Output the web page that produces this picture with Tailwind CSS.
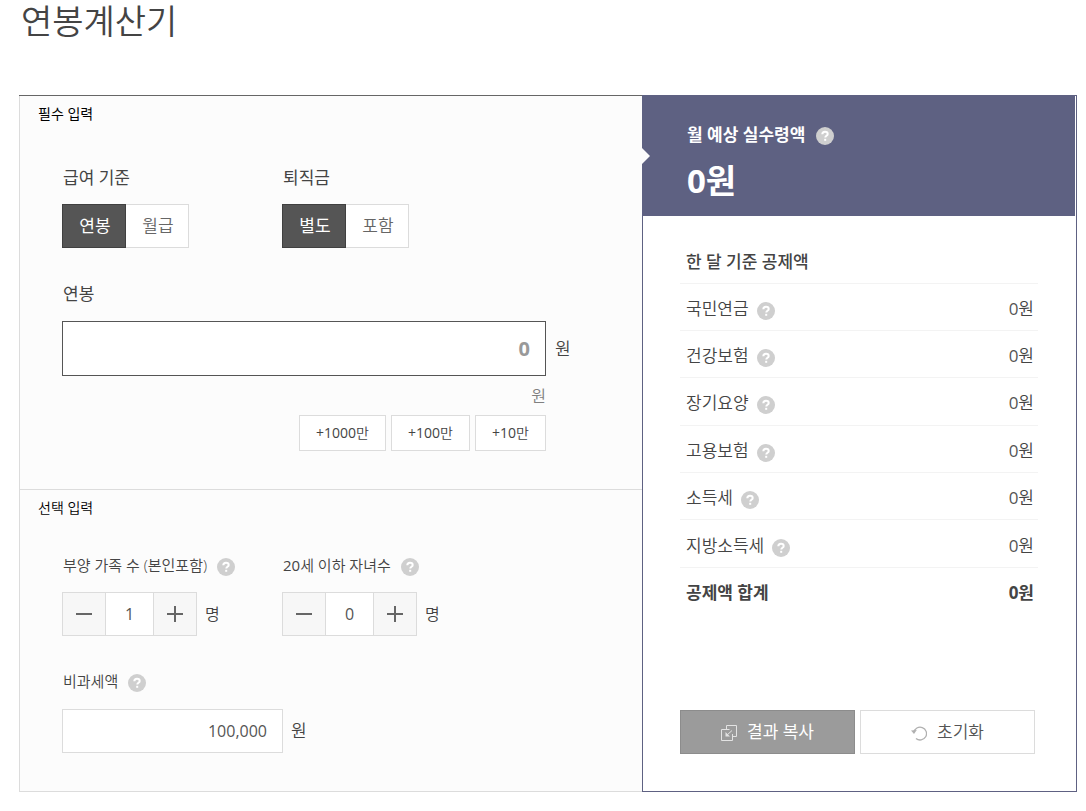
<!DOCTYPE html>
<html lang="ko">
<head>
<meta charset="utf-8">
<meta name="viewport" content="width=device-width, initial-scale=1">
<title>연봉계산기</title>
<script src="https://cdn.jsdelivr.net/npm/@tailwindcss/browser@4"></script>
</head>
<body class="bg-white pl-[19px] pr-[9px] font-['Open_Sans','Noto_Sans_CJK_KR',sans-serif] font-[350] text-[#444]">
<svg class="hidden" aria-hidden="true">
  <symbol id="help" viewBox="0 0 18 18">
    <circle cx="9" cy="9" r="9" fill="#cfcfcf"/>
    <path d="M6.3 7.2C6.3 5.5 7.4 4.7 9 4.7s2.7.9 2.7 2.2c0 1.9-2.4 1.9-2.4 3.7" fill="none" stroke="#fff" stroke-width="2"/>
    <rect x="8.2" y="11.8" width="2" height="2" fill="#fff"/>
  </symbol>
  <symbol id="minus" viewBox="0 0 16 16"><path d="M0 8h16" stroke="#666" stroke-width="2"/></symbol>
  <symbol id="plus" viewBox="0 0 16 16"><path d="M0 8h16M8 0v16" stroke="#666" stroke-width="2"/></symbol>
</svg>

<h1 class="h-[95px] pl-0.5 text-[34px] leading-[42px]">연봉계산기</h1>

<main class="flex">
  <form class="flex min-w-0 flex-1 flex-col border-t border-t-[#666] bg-[#fcfcfc]">
    <section class="border-b border-l border-[#dcdcdc] pb-[38px] pl-[42px]">
      <h2 class="-ml-6 pt-2 text-sm leading-5 font-normal text-black">필수 입력</h2>
      <div class="mt-[42px] flex">
        <fieldset class="w-[220px]">
          <legend class="pl-px text-[17px] leading-6 font-normal">급여 기준</legend>
          <div class="mt-3.5 flex h-11">
            <label class="flex w-16 items-center justify-center border border-[#404040] bg-[#555] pl-0.5 text-[17px] font-normal text-white"><input type="radio" name="basis" class="sr-only" checked>연봉</label>
            <label class="flex w-[63px] items-center justify-center border border-l-0 border-[#dcdcdc] bg-white pl-0.5 text-[17px] text-[#666]"><input type="radio" name="basis" class="sr-only">월급</label>
          </div>
        </fieldset>
        <fieldset>
          <legend class="pl-px text-[17px] leading-6 font-normal">퇴직금</legend>
          <div class="mt-3.5 flex h-11">
            <label class="flex w-16 items-center justify-center border border-[#404040] bg-[#555] pl-0.5 text-[17px] font-normal text-white"><input type="radio" name="severance" class="sr-only" checked>별도</label>
            <label class="flex w-[63px] items-center justify-center border border-l-0 border-[#dcdcdc] bg-white pl-0.5 text-[17px] text-[#666]"><input type="radio" name="severance" class="sr-only">포함</label>
          </div>
        </fieldset>
      </div>
      <label for="salary" class="mt-[34px] block pl-px text-[17px] leading-6 font-normal">연봉</label>
      <div class="mt-[15px] flex items-center gap-[9px]">
        <input id="salary" type="text" value="0" class="h-[55px] w-full max-w-[484px] border border-[#555] bg-white pr-[15px] text-right text-xl font-bold text-[#999]">
        <span class="text-[17px]">원</span>
      </div>
      <div class="max-w-[484px]">
        <p class="mt-2.5 text-right text-base leading-5 text-[#808080]">원</p>
        <div class="mt-[9px] flex h-9 justify-end gap-[5px] text-sm">
          <button type="button" class="w-[87px] border border-[#dcdcdc] bg-white"><span class="font-normal">+1000</span>만</button>
          <button type="button" class="w-[79px] border border-[#dcdcdc] bg-white"><span class="font-normal">+100</span>만</button>
          <button type="button" class="w-[71px] border border-[#dcdcdc] bg-white"><span class="font-normal">+10</span>만</button>
        </div>
      </div>
    </section>

    <section class="flex-1 border-b border-l border-[#dcdcdc] pb-[38px] pl-[42px]">
      <h2 class="-ml-6 pt-2 text-sm leading-5 text-black">선택 입력</h2>
      <div class="mt-[35px] flex">
        <div class="w-[220px]">
          <div class="flex h-6 items-center gap-2.5 pl-px">
            <label for="family" class="text-[15px] leading-6">부양 가족 수 (본인포함)</label>
            <button type="button" aria-label="부양 가족 수 도움말" class="pt-1"><svg class="size-[18px]"><use href="#help"/></svg></button>
          </div>
          <div class="mt-[15px] flex h-11 items-center">
            <button type="button" aria-label="감소" class="flex h-11 w-11 items-center justify-center border border-[#dcdcdc] bg-[#f7f7f7]"><svg class="size-4"><use href="#minus"/></svg></button>
            <input id="family" type="text" value="1" class="h-11 w-[47px] border-y border-[#dcdcdc] bg-white text-center text-base font-normal text-[#555]">
            <button type="button" aria-label="증가" class="flex h-11 w-11 items-center justify-center border border-[#dcdcdc] bg-[#f7f7f7]"><svg class="size-4"><use href="#plus"/></svg></button>
            <span class="ml-2 text-base">명</span>
          </div>
        </div>
        <div>
          <div class="flex h-6 items-center gap-2.5 pl-px">
            <label for="children" class="text-[15px] leading-6"><span class="font-normal">20</span>세 이하 자녀수</label>
            <button type="button" aria-label="자녀수 도움말" class="pt-1"><svg class="size-[18px]"><use href="#help"/></svg></button>
          </div>
          <div class="mt-[15px] flex h-11 items-center">
            <button type="button" aria-label="감소" class="flex h-11 w-11 items-center justify-center border border-[#dcdcdc] bg-[#f7f7f7]"><svg class="size-4"><use href="#minus"/></svg></button>
            <input id="children" type="text" value="0" class="h-11 w-[47px] border-y border-[#dcdcdc] bg-white text-center text-base font-normal text-[#555]">
            <button type="button" aria-label="증가" class="flex h-11 w-11 items-center justify-center border border-[#dcdcdc] bg-[#f7f7f7]"><svg class="size-4"><use href="#plus"/></svg></button>
            <span class="ml-2 text-base">명</span>
          </div>
        </div>
      </div>
      <div class="mt-[33px] flex h-6 items-center gap-2.5 pl-px">
        <label for="taxfree" class="text-[15px] leading-6">비과세액</label>
        <button type="button" aria-label="비과세액 도움말" class="pt-1"><svg class="size-[18px]"><use href="#help"/></svg></button>
      </div>
      <div class="mt-4 flex items-center gap-2">
        <input id="taxfree" type="text" value="100,000" class="h-11 w-[221px] border border-[#dcdcdc] bg-white pr-[15px] text-right text-base font-normal text-[#555]">
        <span class="text-[17px]">원</span>
      </div>
    </section>
  </form>

  <aside class="flex w-[435px] flex-col border border-[#5e6182] bg-white">
    <header class="relative mr-px -ml-px h-[120px] bg-[#5e6182] pt-[27px] pl-[45px] text-white">
      <svg class="absolute top-[52px] left-0 h-4 w-2" viewBox="0 0 8 16"><path d="M0 0l8 8-8 8z" fill="#fcfcfc"/></svg>
      <div class="flex h-6 items-center gap-[11px]">
        <h2 class="text-[17px] leading-6 font-bold">월 예상 실수령액</h2>
        <button type="button" aria-label="월 예상 실수령액 도움말" class="pt-0.5"><svg class="size-[18px]"><use href="#help"/></svg></button>
      </div>
      <p class="mt-3.5 text-[33px] leading-10 font-bold">0원</p>
    </header>
    <div class="flex flex-1 flex-col justify-between pt-[21px] pr-[38px] pb-[37px] pl-[37px]">
      <table class="h-[377px] w-full text-[17px] leading-6">
        <thead><tr class="h-[46px] border-b border-[#f3f3f3]"><th colspan="2" class="pt-1 pl-1.5 text-left font-medium">한 달 기준 공제액</th></tr></thead>
        <tbody>
          <tr class="border-b border-[#f3f3f3]"><th class="pt-1 pl-1.5 text-left font-[350]"><div class="flex items-center gap-2">국민연금<button type="button" aria-label="국민연금 도움말" class="pt-1"><svg class="size-[18px]"><use href="#help"/></svg></button></div></th><td class="pt-1 pr-1 text-right"><span class="font-normal text-[#555]">0</span>원</td></tr>
          <tr class="border-b border-[#f3f3f3]"><th class="pt-1 pl-1.5 text-left font-[350]"><div class="flex items-center gap-2">건강보험<button type="button" aria-label="건강보험 도움말" class="pt-1"><svg class="size-[18px]"><use href="#help"/></svg></button></div></th><td class="pt-1 pr-1 text-right"><span class="font-normal text-[#555]">0</span>원</td></tr>
          <tr class="border-b border-[#f3f3f3]"><th class="pt-1 pl-1.5 text-left font-[350]"><div class="flex items-center gap-2">장기요양<button type="button" aria-label="장기요양 도움말" class="pt-1"><svg class="size-[18px]"><use href="#help"/></svg></button></div></th><td class="pt-1 pr-1 text-right"><span class="font-normal text-[#555]">0</span>원</td></tr>
          <tr class="border-b border-[#f3f3f3]"><th class="pt-1 pl-1.5 text-left font-[350]"><div class="flex items-center gap-2">고용보험<button type="button" aria-label="고용보험 도움말" class="pt-1"><svg class="size-[18px]"><use href="#help"/></svg></button></div></th><td class="pt-1 pr-1 text-right"><span class="font-normal text-[#555]">0</span>원</td></tr>
          <tr class="border-b border-[#f3f3f3]"><th class="pt-1 pl-1.5 text-left font-[350]"><div class="flex items-center gap-2">소득세<button type="button" aria-label="소득세 도움말" class="pt-1"><svg class="size-[18px]"><use href="#help"/></svg></button></div></th><td class="pt-1 pr-1 text-right"><span class="font-normal text-[#555]">0</span>원</td></tr>
          <tr class="border-b border-[#f3f3f3]"><th class="pt-1 pl-1.5 text-left font-[350]"><div class="flex items-center gap-2">지방소득세<button type="button" aria-label="지방소득세 도움말" class="pt-1"><svg class="size-[18px]"><use href="#help"/></svg></button></div></th><td class="pt-1 pr-1 text-right"><span class="font-normal text-[#555]">0</span>원</td></tr>
          <tr><th class="pt-1 pl-1.5 text-left font-bold">공제액 합계</th><td class="pt-1 pr-1 text-right font-bold">0원</td></tr>
        </tbody>
      </table>
      <div class="mr-[3px] flex h-11 gap-[5px] text-[17px]">
        <button type="button" class="flex flex-1 items-center justify-center gap-2.5 border border-[#8c8c8c] bg-[#9b9b9b] font-normal text-white">
          <svg class="mt-0.5 size-4" viewBox="0 0 16 16" fill="none" stroke="#e3e3e3"><path d="M5.500 4v-3.500h10v11h-3.500M8.500 4.500h-8v11h11v-6.500M5.500 10.500l5.500-5"/><path d="M4.500 7v4.500h4.500z" fill="#e3e3e3" stroke="none"/></svg>결과 복사
        </button>
        <button type="button" class="flex flex-1 items-center justify-center gap-2.5 border border-[#dcdcdc] bg-white text-[#555]">
          <svg class="mt-0.5 size-4" viewBox="0 0 16 16" fill="none" stroke="#b0b0b0" stroke-width="1.300"><path d="M2.800 7.500A6.400 6.400 0 1 1 5 13.500"/><path d="M0 5.500l5.800-.5-2.800 4z" fill="#b0b0b0" stroke="none"/></svg>초기화
        </button>
      </div>
    </div>
  </aside>
</main>
</body>
</html>
